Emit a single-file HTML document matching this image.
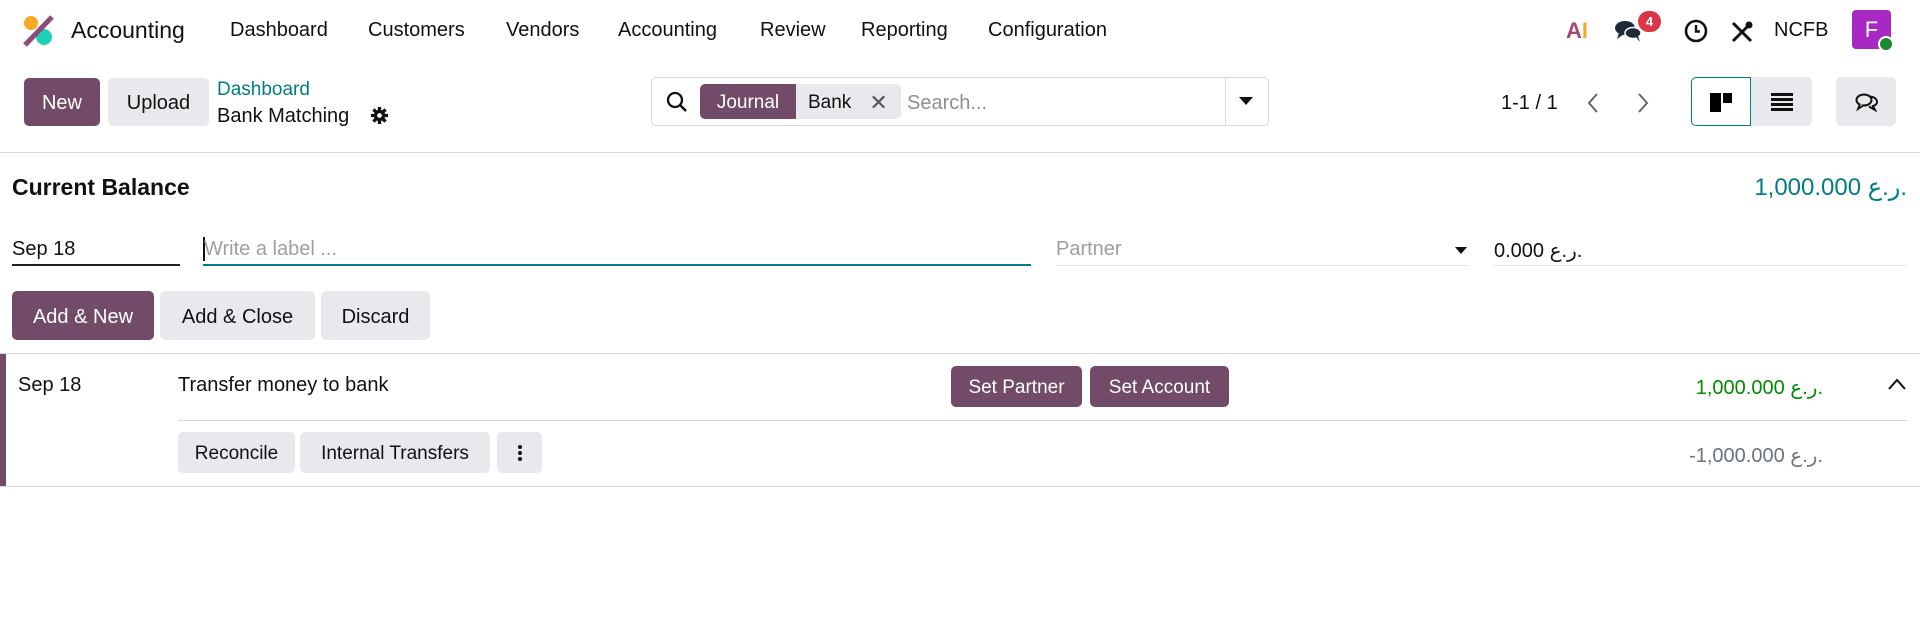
<!DOCTYPE html>
<html><head><meta charset="utf-8"><style>
*{box-sizing:border-box;margin:0;padding:0}
body{width:1920px;height:617px;background:#fff;font-family:"Liberation Sans","DejaVu Sans",sans-serif;color:#1f2937;position:relative;overflow:hidden}
.a{position:absolute;white-space:nowrap}
.nav{font-size:20px;top:19px;color:#111}
.btn{position:absolute;border-radius:5px;display:flex;align-items:center;justify-content:center;font-size:20px;white-space:nowrap;padding-top:3px}
.p{background:#714B67;color:#fff}
.g{background:#e7e9ed;color:#111}
.line{position:absolute;height:1px;background:#d8dadd}
</style></head><body>
<svg class="a" style="left:22px;top:14px" width="34" height="34" viewBox="0 0 34 34">
<circle cx="9" cy="9" r="7" fill="#F9A825"/><circle cx="22" cy="23" r="8" fill="#1ed1b4"/>
<line x1="3" y1="31" x2="30" y2="3" stroke="#8b4d77" stroke-width="5"/></svg>
<div class="a" style="left:71px;top:17px;font-size:23px;color:#111">Accounting</div>
<div class="a nav" style="left:230px">Dashboard</div>
<div class="a nav" style="left:368px">Customers</div>
<div class="a nav" style="left:506px">Vendors</div>
<div class="a nav" style="left:618px">Accounting</div>
<div class="a nav" style="left:760px">Review</div>
<div class="a nav" style="left:861px">Reporting</div>
<div class="a nav" style="left:988px">Configuration</div>
<div class="a" style="left:1566px;top:18px;font-size:22px;font-weight:bold;color:#a34a6e">A<span style="color:#f5a623">I</span></div>
<svg class="a" style="left:1614px;top:18px" width="30" height="26" viewBox="0 0 30 26"><ellipse cx="11" cy="10" rx="10" ry="7" fill="#1f2937"/><path d="M5 15 L3 21 L10 16Z" fill="#1f2937"/><ellipse cx="19" cy="15" rx="8" ry="5.5" fill="#1f2937" stroke="#fff" stroke-width="1.5"/><path d="M22 19 L26 24 L24 18Z" fill="#1f2937"/></svg>
<div class="a" style="left:1638px;top:11px;width:23px;height:21px;border-radius:11px;background:#dc3545;color:#fff;font-size:13px;font-weight:bold;text-align:center;line-height:21px">4</div>
<svg class="a" style="left:1684px;top:19px" width="24" height="24" viewBox="0 0 24 24"><circle cx="12" cy="12" r="10" fill="none" stroke="#111" stroke-width="2.6"/><path d="M12 6V12.5H16" fill="none" stroke="#111" stroke-width="2.4"/></svg>
<svg class="a" style="left:1730px;top:20px" width="24" height="24" viewBox="0 0 24 24"><path d="M3 3L21 21M21 3L3 21" stroke="#111" stroke-width="3"/><circle cx="19" cy="5" r="3.5" fill="#111"/></svg>
<div class="a" style="left:1774px;top:19px;font-size:20px;color:#111">NCFB</div>
<div class="a" style="left:1852px;top:10px;width:39px;height:39px;border-radius:4px;background:#a728c2;color:#fff;font-size:22px;text-align:center;line-height:39px">F</div>
<div class="a" style="left:1878px;top:36px;width:16px;height:16px;border-radius:8px;background:#198a2e;border:2px solid #fff"></div>
<div class="btn p" style="left:24px;top:78px;width:76px;height:48px">New</div>
<div class="btn g" style="left:108px;top:78px;width:101px;height:48px">Upload</div>
<div class="a" style="left:217px;top:79px;font-size:19px;color:#017e84">Dashboard</div>
<div class="a" style="left:217px;top:105px;font-size:20px;color:#111">Bank Matching</div>
<svg class="a" style="left:370px;top:106px" width="19" height="19" viewBox="0 0 20 20"><g fill="#111"><circle cx="10" cy="10" r="6"/><g stroke="#111" stroke-width="3.5"><line x1="10" y1="1" x2="10" y2="19"/><line x1="1" y1="10" x2="19" y2="10"/><line x1="3.6" y1="3.6" x2="16.4" y2="16.4"/><line x1="16.4" y1="3.6" x2="3.6" y2="16.4"/></g></g><circle cx="10" cy="10" r="2.5" fill="#fff"/></svg>
<div class="a" style="left:651px;top:77px;width:618px;height:49px;border:1px solid #d8dadd;border-radius:5px"></div>
<div class="a" style="left:1225px;top:78px;width:1px;height:47px;background:#d8dadd"></div>
<svg class="a" style="left:1239px;top:97px" width="14" height="9"><path d="M0 0H14L7 8Z" fill="#111"/></svg>
<svg class="a" style="left:666px;top:91px" width="22" height="22" viewBox="0 0 22 22"><circle cx="9" cy="9" r="7" fill="none" stroke="#111" stroke-width="2.3"/><line x1="14" y1="14" x2="20" y2="20" stroke="#111" stroke-width="2.5"/></svg>
<div class="btn" style="left:700px;top:84px;width:96px;height:35px;background:#714B67;color:#fff;border-radius:5px 0 0 5px;font-size:19px">Journal</div>
<div class="btn" style="left:796px;top:84px;width:105px;height:35px;background:#e7e9ed;color:#111;border-radius:0 5px 5px 0;font-size:19px;justify-content:flex-start;padding-left:12px">Bank<span style="margin-left:18px;font-size:22px;color:#555">✕</span></div>
<div class="a" style="left:907px;top:92px;font-size:20px;color:#8a8f98">Search...</div>
<div class="a" style="left:1501px;top:92px;font-size:20px;color:#111">1-1 / 1</div>
<svg class="a" style="left:1586px;top:92px" width="14" height="22"><path d="M11 2L3 11L11 20" fill="none" stroke="#666" stroke-width="2"/></svg>
<svg class="a" style="left:1636px;top:92px" width="14" height="22"><path d="M3 2L11 11L3 20" fill="none" stroke="#666" stroke-width="2"/></svg>
<div class="a" style="left:1691px;top:77px;width:60px;height:49px;border:1.5px solid #017e84;border-radius:5px 0 0 5px;background:#fff"></div>
<div class="a" style="left:1710px;top:93px;width:11px;height:19px;background:#000"></div>
<div class="a" style="left:1723px;top:93px;width:9px;height:10px;background:#000"></div>
<div class="a" style="left:1751px;top:77px;width:61px;height:49px;background:#e7e9ed;border-radius:0 5px 5px 0"></div>
<svg class="a" style="left:1771px;top:93px" width="22" height="18"><g fill="#111"><rect y="0" width="22" height="3"/><rect y="5" width="22" height="3"/><rect y="10" width="22" height="3"/><rect y="15" width="22" height="3"/></g></svg>
<div class="a" style="left:1836px;top:77px;width:60px;height:49px;background:#e7e9ed;border-radius:5px"></div>
<svg class="a" style="left:1855px;top:92px" width="24" height="20" viewBox="0 0 24 20"><ellipse cx="9" cy="8" rx="7.5" ry="5.5" fill="none" stroke="#111" stroke-width="2"/><path d="M5 12L3 17L9 13" fill="#fff" stroke="#111" stroke-width="1.8"/><path d="M14 4.5C19 4.5 22 7 22 10C22 12 20 13.5 18 14L20 18L14 14.5" fill="none" stroke="#111" stroke-width="2"/></svg>
<div class="line" style="left:0;top:152px;width:1920px"></div>
<div class="a" style="left:12px;top:174px;font-size:23px;font-weight:bold;color:#111">Current Balance</div>
<div class="a" style="right:13px;top:173px;font-size:24px;color:#017e84">1,000.000 ر.ع.</div>
<div class="a" style="left:12px;top:238px;font-size:20px;color:#111">Sep 18</div>
<div class="a" style="left:12px;top:264px;width:168px;height:2px;background:#222"></div>
<div class="a" style="left:203px;top:237px;width:2px;height:24px;background:#111"></div>
<div class="a" style="left:204px;top:238px;font-size:20px;color:#9aa0a6">Write a label ...</div>
<div class="a" style="left:203px;top:264px;width:828px;height:2px;background:#017e84"></div>
<div class="a" style="left:1056px;top:238px;font-size:20px;color:#9aa0a6">Partner</div>
<svg class="a" style="left:1455px;top:247px" width="12" height="8"><path d="M0 0H12L6 7Z" fill="#111"/></svg>
<div class="line" style="left:1056px;top:265px;width:413px;background:#e5e7ea"></div>
<div class="a" style="left:1494px;top:238px;font-size:20px;color:#111">0.000 ر.ع.</div>
<div class="line" style="left:1494px;top:265px;width:413px;background:#e5e7ea"></div>
<div class="btn p" style="left:12px;top:291px;width:142px;height:49px">Add &amp; New</div>
<div class="btn g" style="left:160px;top:291px;width:155px;height:49px">Add &amp; Close</div>
<div class="btn g" style="left:321px;top:291px;width:109px;height:49px">Discard</div>
<div class="line" style="left:0;top:353px;width:1920px"></div>
<div class="a" style="left:0;top:354px;width:6px;height:132px;background:#714B67"></div>
<div class="a" style="left:18px;top:374px;font-size:20px;color:#111">Sep 18</div>
<div class="a" style="left:178px;top:374px;font-size:20px;color:#111">Transfer money to bank</div>
<div class="btn p" style="left:951px;top:366px;width:131px;height:41px;font-size:19px">Set Partner</div>
<div class="btn p" style="left:1090px;top:366px;width:139px;height:41px;font-size:19px">Set Account</div>
<div class="a" style="right:97px;top:375px;font-size:20px;color:#008a00">1,000.000 ر.ع.</div>
<svg class="a" style="left:1887px;top:378px" width="20" height="12"><path d="M2 11L10 2L18 11" fill="none" stroke="#111" stroke-width="2"/></svg>
<div class="line" style="left:178px;top:420px;width:1729px"></div>
<div class="btn g" style="left:178px;top:432px;width:117px;height:41px;font-size:19px">Reconcile</div>
<div class="btn g" style="left:300px;top:432px;width:190px;height:41px;font-size:19px">Internal Transfers</div>
<div class="btn g" style="left:497px;top:432px;width:45px;height:41px;padding-top:0"><svg width="4" height="16"><circle cx="2" cy="2" r="2" fill="#111"/><circle cx="2" cy="8" r="2" fill="#111"/><circle cx="2" cy="14" r="2" fill="#111"/></svg></div>
<div class="a" style="right:97px;top:443px;font-size:20px;color:#6b7280">-1,000.000 ر.ع.</div>
<div class="line" style="left:0;top:486px;width:1920px"></div>
</body></html>
